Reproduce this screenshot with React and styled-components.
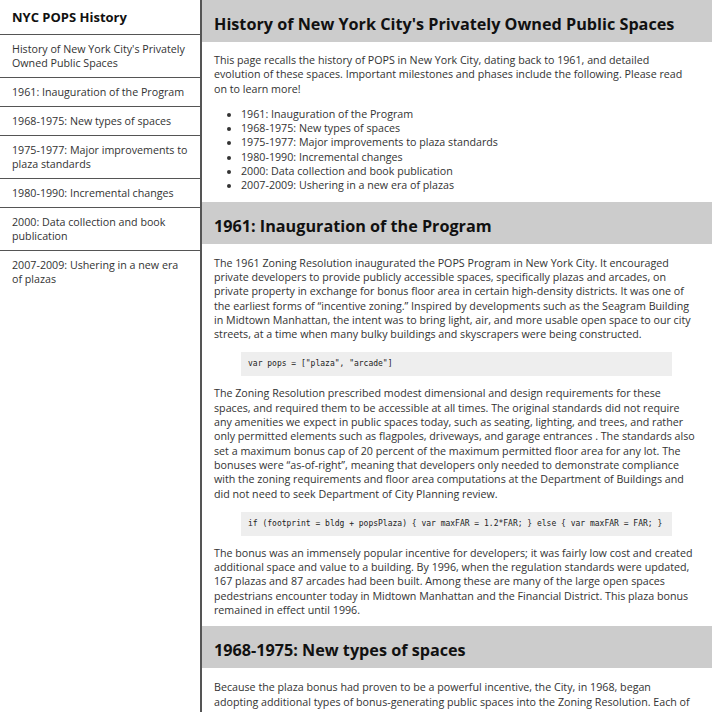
import React from "react";
import styled, { createGlobalStyle } from "styled-components";

const Global = createGlobalStyle`
  html, body { margin: 0; padding: 0; height: 100%; overflow: hidden; background: #fff; }
  body { font-family: "Open Sans", "Liberation Sans", sans-serif; }
  #root { height: 100%; }
`;

const Layout = styled.div`
  display: flex;
  height: 100vh;
`;

const Sidebar = styled.nav`
  width: 200px;
  flex: 0 0 200px;
  border-right: 2px solid #555;
  display: flex;
  flex-direction: column;
`;

const SideTitle = styled.div`
  font-size: 13px;
  font-weight: 700;
  color: #111;
  padding: 8.5px 12px 8.5px 12px;
  line-height: 17px;
  border-bottom: 1.5px solid #555;
`;

const SideItem = styled.a`
  display: block;
  font-size: 10.7px;
  line-height: 14.3px;
  color: #333;
  text-decoration: none;
  padding: 7px 12px 6.5px 12px;
  border-bottom: 1.5px solid #555;
  &:last-child { border-bottom: none; }
`;

const Main = styled.main`
  flex: 1;
  overflow: hidden;
  color: #333;
  font-size: 10.7px;
  line-height: 14.3px;
`;

const Band = styled.h1`
  margin: 0;
  background: #ccc;
  color: #111;
  font-size: 16.2px;
  font-weight: 700;
  line-height: 22px;
  padding: 13px 12px 7px 12px;
`;

const Body = styled.section`
  padding: ${(p) => (p.$intro ? "11px" : "12px")} 13px 9px 12px;
`;

const P = styled.p`
  margin: 0 0 11px 0;
  &:last-child { margin-bottom: 0; }
`;

const List = styled.ul`
  margin: 0;
  padding-left: 27px;
  list-style: disc;
`;

const Code = styled.pre`
  margin: 11px 27px 10px 27px;
  background: #eee;
  padding: 5px 7px;
  font-family: "DejaVu Sans Mono", "Liberation Mono", monospace;
  font-size: 8px;
  line-height: 14px;
  color: #222;
  white-space: pre;
  overflow: hidden;
`;

const milestones = [
  "History of New York City's Privately Owned Public Spaces",
  "1961: Inauguration of the Program",
  "1968-1975: New types of spaces",
  "1975-1977: Major improvements to plaza standards",
  "1980-1990: Incremental changes",
  "2000: Data collection and book publication",
  "2007-2009: Ushering in a new era of plazas",
];

export default function App() {
  return (
    <>
      <Global />
      <Layout>
        <Sidebar>
          <SideTitle>NYC POPS History</SideTitle>
          {milestones.map((m) => (
            <SideItem key={m} href="#">{m}</SideItem>
          ))}
        </Sidebar>
        <Main>
          <Band>History of New York City's Privately Owned Public Spaces</Band>
          <Body $intro>
            <P>
              This page recalls the history of POPS in New York City, dating back to 1961, and detailed<br />
              evolution of these spaces. Important milestones and phases include the following. Please read<br />
              on to learn more!
            </P>
            <List>
              {milestones.slice(1).map((m) => (
                <li key={m}>{m}</li>
              ))}
            </List>
          </Body>
          <Band as="h2">1961: Inauguration of the Program</Band>
          <Body>
            <P>
              The 1961 Zoning Resolution inaugurated the POPS Program in New York City. It encouraged
              private developers to provide publicly accessible spaces, specifically plazas and arcades, on
              private property in exchange for bonus floor area in certain high-density districts. It was one of
              the earliest forms of “incentive zoning.” Inspired by developments such as the Seagram Building
              in Midtown Manhattan, the intent was to bring light, air, and more usable open space to our city
              streets, at a time when many bulky buildings and skyscrapers were being constructed.
            </P>
            <Code>{'var pops = ["plaza", "arcade"]'}</Code>
            <P>
              The Zoning Resolution prescribed modest dimensional and design requirements for these
              spaces, and required them to be accessible at all times. The original standards did not require
              any amenities we expect in public spaces today, such as seating, lighting, and trees, and rather
              only permitted elements such as flagpoles, driveways, and garage entrances . The standards also
              set a maximum bonus cap of 20 percent of the maximum permitted floor area for any lot. The
              bonuses were “as-of-right”, meaning that developers only needed to demonstrate compliance
              with the zoning requirements and floor area computations at the Department of Buildings and
              did not need to seek Department of City Planning review.
            </P>
            <Code>{"if (footprint = bldg + popsPlaza) { var maxFAR = 1.2*FAR; } else { var maxFAR = FAR; }"}</Code>
            <P>
              The bonus was an immensely popular incentive for developers; it was fairly low cost and created
              additional space and value to a building. By 1996, when the regulation standards were updated,
              167 plazas and 87 arcades had been built. Among these are many of the large open spaces
              pedestrians encounter today in Midtown Manhattan and the Financial District. This plaza bonus
              remained in effect until 1996.
            </P>
          </Body>
          <Band as="h2">1968-1975: New types of spaces</Band>
          <Body>
            <P>
              Because the plaza bonus had proven to be a powerful incentive, the City, in 1968, began<br />
              adopting additional types of bonus-generating public spaces into the Zoning Resolution. Each of<br />
              these new types of spaces came with its own set of design standards and bonus ratios.
            </P>
          </Body>
        </Main>
      </Layout>
    </>
  );
}
